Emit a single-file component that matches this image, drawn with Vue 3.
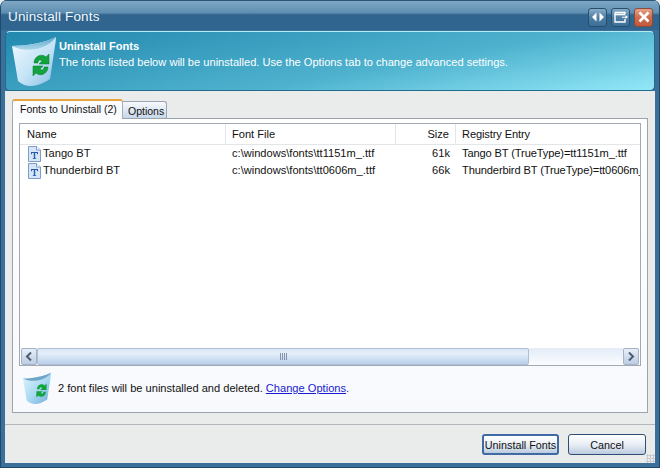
<script setup>
const rows = [
  { name: 'Tango BT', file: 'c:\\windows\\fonts\\tt1151m_.ttf', size: '61k', reg: 'Tango BT (TrueType)=tt1151m_.ttf' },
  { name: 'Thunderbird BT', file: 'c:\\windows\\fonts\\tt0606m_.ttf', size: '66k', reg: 'Thunderbird BT (TrueType)=tt0606m_.ttf' }
]
</script>

<template>
  <div class="window">
    <header class="titlebar">
      <span class="title">Uninstall Fonts</span>
      <div class="controls">
        <button class="ctl">
          <svg width="14" height="10" viewBox="0 0 14 10"><path d="M5.5 0.5V9.5L1 5zM8.5 0.5V9.5L13 5z" fill="#fff"/></svg>
        </button>
        <button class="ctl">
          <svg width="14" height="12" viewBox="0 0 14 12"><path d="M1 1.5H11V3M1 1.5V11H11V8M1 3.5H11" fill="none" stroke="#fff" stroke-width="1.4"/><path d="M8 5.8H11.5V4L14 6 11.5 8V6.8H8z" fill="#fff"/></svg>
        </button>
        <button class="ctl close">
          <svg width="12" height="12" viewBox="0 0 12 12"><path d="M1.5 1.5L10.5 10.5M10.5 1.5L1.5 10.5" stroke="#fff" stroke-width="2.6"/></svg>
        </button>
      </div>
    </header>

    <section class="banner">
      <svg class="bin-large" width="46" height="50" viewBox="0 0 46 50">
        <defs>
          <linearGradient id="binA" x1="0" y1="0" x2="1" y2="1">
            <stop offset="0" stop-color="#f2faff"/><stop offset=".55" stop-color="#c4e4f6"/><stop offset="1" stop-color="#86bce4"/>
          </linearGradient>
          <linearGradient id="binRim" x1="0" y1="0" x2="0" y2="1">
            <stop offset="0" stop-color="#5fa9cf"/><stop offset="1" stop-color="#a9d6ea"/>
          </linearGradient>
        </defs>
        <path d="M1 10C14 10 34 7 45 1 45 4 44.500 7 44 10L39 43C33 47 26 50 20 50 15 50 10 48 7 45Z" fill="url(#binA)"/>
        <path d="M1 10C14 10 34 7 45 1 36 14 14 17 1 10Z" fill="url(#binRim)"/>
        <path d="M23 27C23 20 31 17 35 21L38 18V28H28L31 25C29 23 27 24 27 27ZM37 31C37 38 29 41 25 37L22 40V30H32L29 33C31 35 33 34 33 31Z" fill="#12a33e" stroke="#0b7a2c" stroke-width=".5"/>
      </svg>
      <div class="banner-text">
        <strong>Uninstall Fonts</strong>
        <span>The fonts listed below will be uninstalled. Use the Options tab to change advanced settings.</span>
      </div>
    </section>

    <main class="content">
      <nav class="tabs">
        <div class="tab active">Fonts to Uninstall (2)</div>
        <div class="tab">Options</div>
      </nav>
      <div class="panel">
        <div class="list">
          <div class="table">
            <div class="row head">
              <div class="c-name">Name</div>
              <div class="c-file">Font File</div>
              <div class="c-size">Size</div>
              <div class="c-reg">Registry Entry</div>
            </div>
            <div v-for="r in rows" :key="r.name" class="row item">
              <div class="c-name">
                <svg class="ficon" width="14" height="16" viewBox="0 0 14 16">
                  <path d="M1.500 .5H9.500L13.500 4V15.500H1.500Z" fill="#d6e5f7" stroke="#7f9cc8"/>
                  <path d="M9.500 .5V4H13.500" fill="#fff" stroke="#7f9cc8"/>
                  <path d="M4 6H11V8.200H10.200L9.800 7H8.200V12.300H9.200V13H5.800V12.300H6.800V7H5.200L4.800 8.200H4Z" fill="#2a5aa8"/>
                </svg>
                <span>{{ r.name }}</span>
              </div>
              <div class="c-file">{{ r.file }}</div>
              <div class="c-size">{{ r.size }}</div>
              <div class="c-reg">{{ r.reg }}</div>
            </div>
          </div>
          <div class="scrollbar">
            <div class="sb-btn">
              <svg width="8" height="9" viewBox="0 0 8 9"><path d="M6 .5L2 4.500 6 8.500" fill="none" stroke="#4d5a70" stroke-width="2"/></svg>
            </div>
            <div class="sb-track">
              <div class="sb-thumb"><span class="grip"></span></div>
            </div>
            <div class="sb-btn">
              <svg width="8" height="9" viewBox="0 0 8 9"><path d="M2 .5L6 4.500 2 8.500" fill="none" stroke="#4d5a70" stroke-width="2"/></svg>
            </div>
          </div>
        </div>
        <div class="status">
          <svg class="bin-small" width="30" height="32" viewBox="0 0 46 50">
            <defs>
              <linearGradient id="binB" x1="0" y1="0" x2="1" y2="1">
                <stop offset="0" stop-color="#e2f5fd"/><stop offset=".55" stop-color="#a8d8f2"/><stop offset="1" stop-color="#6ea9d6"/>
              </linearGradient>
            </defs>
            <path d="M1 10C14 10 34 7 45 1 45 4 44.500 7 44 10L39 43C33 47 26 50 20 50 15 50 10 48 7 45Z" fill="url(#binB)"/>
            <path d="M1 10C14 10 34 7 45 1 36 14 14 17 1 10Z" fill="#6fa6c8"/>
            <path d="M23 27C23 20 31 17 35 21L38 18V28H28L31 25C29 23 27 24 27 27ZM37 31C37 38 29 41 25 37L22 40V30H32L29 33C31 35 33 34 33 31Z" fill="#12a33e"/>
          </svg>
          <p>2 font files will be uninstalled and deleted. <a href="#" @click.prevent>Change Options</a><span class="dot">.</span></p>
        </div>
      </div>
    </main>

    <footer class="footer">
      <button class="btn default">Uninstall Fonts</button>
      <button class="btn">Cancel</button>
      <span class="grippy"></span>
    </footer>
  </div>
</template>

<style>
html, body { margin: 0; padding: 0; background: #eaecec; }
</style>

<style scoped>
.window {
  width: 660px; height: 468px; box-sizing: border-box; display: flex; flex-direction: column;
  font-family: "Liberation Sans", Arial, sans-serif; font-size: 11.1px; color: #111;
  padding: 0 4px 4px; border-radius: 7px 7px 0 0; overflow: hidden; position: relative;
  border-left: 1px solid #1f4a6e; border-right: 1px solid #1f4a6e; border-bottom: 1px solid #1f4a6e;
  background: #3a7099;
}
.titlebar {
  height: 30px; flex: none; margin: 0 -4px; padding: 0 6px 0 7px; display: flex; align-items: center; justify-content: space-between;
  background: linear-gradient(#7fa7c4 0, #5f8fb2 40%, #31658e 48%, #2f6590 100%);
  border-top: 1px solid #2a5577; box-sizing: border-box;
}
.title { color: #f4f9fc; font-size: 13.5px; letter-spacing: .15px; padding-top: 2px; }
.controls { display: flex; gap: 4px; margin-top: 3px; }
.ctl {
  width: 19px; height: 19px; padding: 0; display: flex; align-items: center; justify-content: center;
  border: 1px solid #27506f; border-radius: 3px; background: linear-gradient(#87abc6, #4f7fa5 50%, #3c6e97);
}
.close { background: linear-gradient(#e4a28a, #cf6b4e 50%, #c15a3c); border-color: #8b4a38; }
.banner {
  height: 60px; flex: none; box-sizing: border-box; display: flex; gap: 2px; padding: 4px 0 0 5px;
  margin-top: 1px;
  border: 1px solid #1f6c8d; border-top-color: #b4eaf4; border-radius: 5px;
  background: linear-gradient(170deg, #2288ae 0%, #4fb3cf 60%, #93e8f8 100%);
  color: #fff;
}
.bin-large, .bin-small { flex: none; }
.banner-text { display: flex; flex-direction: column; gap: 1px; padding-top: 3px; line-height: 15px; }
.banner-text strong { font-weight: 700; }
.content { flex: 1; background: #eaecec; padding: 7px 7px 10px; display: flex; flex-direction: column; min-height: 0; }
.tabs { display: flex; align-items: flex-end; height: 20px; flex: none; position: relative; z-index: 1; font-size: 10.5px; }
.tab {
  height: 17px; width: 44px; box-sizing: border-box; padding: 3px 0 0 5px; border: 1px solid #9ba6b4; border-bottom: none; border-left: none;
  border-radius: 0 3px 0 0; background: linear-gradient(#f7f9fc, #c7d6ea); white-space: nowrap;
}
.tab.active {
  height: 20px; width: 111px; padding: 2px 0 0 7px; background: #fbfcfe; border: 1px solid #a7adb6; border-bottom: none;
  border-top: 2px solid #e8a33d; border-radius: 3px 3px 0 0; margin-bottom: -1px;
}
.panel {
  height: 295px; flex: none; box-sizing: border-box; padding: 4px 6px 0; display: flex; flex-direction: column;
  border: 1px solid #9ba3ad; background: linear-gradient(#ffffff, #f7f9fd);
}
.list { height: 243px; flex: none; box-sizing: border-box; border: 1px solid #a2a9b3; background: #fff; display: flex; flex-direction: column; }
.table { flex: 1; overflow: hidden; }
.row { display: grid; grid-template-columns: 206px 170px 60px 1fr; white-space: nowrap; }
.head { height: 21px; border-bottom: 1px solid #e3e6e9; align-items: center; box-sizing: border-box; }
.head > div { height: 100%; line-height: 21px; box-sizing: border-box; border-right: 1px solid #e3e6e9; }
.head > div:last-child { border-right: none; }
.item { height: 17px; line-height: 17px; }
.c-name { padding-left: 7px; display: flex; align-items: center; gap: 2px; }
.c-file { padding-left: 6px; }
.c-size { text-align: right; padding-right: 6px; }
.c-reg { padding-left: 6px; overflow: hidden; letter-spacing: -.12px; }
.ficon { flex: none; }
.scrollbar { height: 17px; flex: none; display: flex; margin: 0 1px; background: linear-gradient(#e4ecf8, #fafcff); }
.sb-btn {
  width: 16px; flex: none; box-sizing: border-box; display: flex; align-items: center; justify-content: center;
  border: 1px solid #a5b3c7; border-radius: 2px; background: linear-gradient(#e7eef9, #bccde4);
}
.sb-track { flex: 1; }
.sb-thumb {
  width: 492px; height: 100%; box-sizing: border-box; display: flex; align-items: center; justify-content: center;
  border: 1px solid #b0bfd4; border-radius: 2px; background: linear-gradient(#d9e6f6, #e5eefa 30%, #b9d0ea);
}
.grip { width: 7px; height: 7px; background: repeating-linear-gradient(90deg, #8493a8 0 1px, transparent 1px 2px); }
.status { flex: 1; display: flex; align-items: center; gap: 5px; padding: 0 0 2px 3px; }
.status p { margin: 0; padding-left: 1px; }
.status a { color: #1a1ad0; text-decoration: underline; }
.dot { color: #1a1ad0; }
.footer {
  height: 39px; flex: none; padding: 9px 9px 0 0; box-sizing: border-box; background: #eaecec; border-top: 1px solid #b3b7bb;
  display: flex; justify-content: flex-end; align-items: flex-start; gap: 9px; position: relative;
}
.btn {
  height: 21px; width: 78px; padding: 0; font: inherit; font-size: 10.8px; color: #111; border: 1px solid #2e4f73; border-radius: 3px; white-space: nowrap;
  background: linear-gradient(#ffffff, #e9eef5 50%, #bccbdf);
}
.btn.default { width: 77px; border: 2px solid #3f6aa6; }
.grippy {
  position: absolute; right: 0; bottom: 0; width: 9px; height: 9px;
  background: radial-gradient(circle, #c9cccf 1px, transparent 1.2px) 0 0 / 3px 3px;
}
</style>
